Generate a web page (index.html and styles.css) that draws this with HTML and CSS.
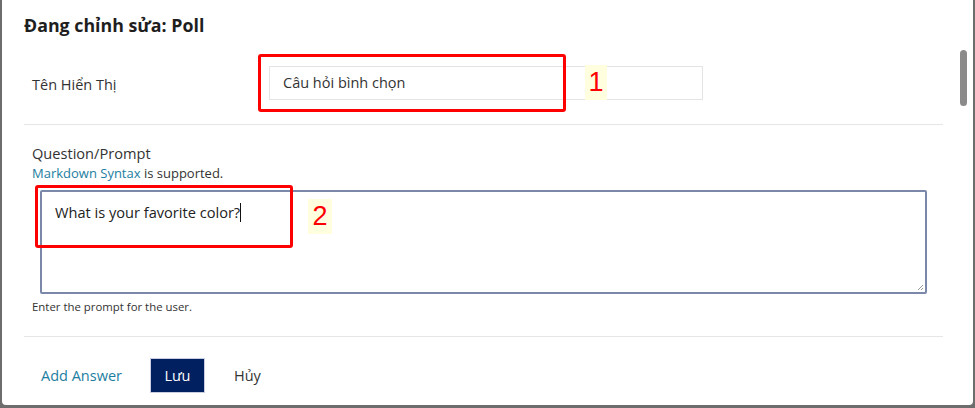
FILE: index.html
```html
<!DOCTYPE html>
<html lang="vi">
<head>
<meta charset="utf-8">
<title>Đang chỉnh sửa: Poll</title>
<link rel="stylesheet" href="styles.css">
</head>
<body>
<div class="modal">
  <h1 class="title">Đang chỉnh sửa: Poll</h1>
  <div class="content">
    <div class="field-row">
      <label class="field-label">Tên Hiển Thị</label>
      <div class="input-wrap">
        <div class="text-input">Câu hỏi bình chọn</div>
        <div class="mark mark-box mark-box-1"></div>
        <div class="mark mark-num mark-num-1">1</div>
      </div>
    </div>
    <div class="field-block">
      <div class="block-label">Question/Prompt</div>
      <div class="hint"><a class="link">Markdown Syntax</a> is supported.</div>
      <div class="textarea-wrap">
        <div class="textarea"><span class="ta-text">What is your favorite color?</span><span class="caret"></span>
          <svg class="resize" width="8" height="8" viewBox="0 0 8 8"><path d="M7 2 L2 7 M7 5 L5 7" stroke="#9a9a9a" stroke-width="1"/></svg>
        </div>
        <div class="mark mark-box mark-box-2"></div>
        <div class="mark mark-num mark-num-2">2</div>
      </div>
      <div class="help">Enter the prompt for the user.</div>
    </div>
    <div class="actions">
      <a class="link add-answer">Add Answer</a>
      <button class="btn-save">Lưu</button>
      <a class="cancel">Hủy</a>
    </div>
  </div>
  <div class="scrollbar"></div>
</div>
</body>
</html>
```
FILE: styles.css
```css
html, body {
  margin: 0;
  padding: 0;
  height: 100%;
}
body {
  background: #6d6d6d;
  font-family: "Open Sans", "Noto Sans", sans-serif;
  color: #333;
  overflow: hidden;
}
.modal {
  position: relative;
  margin: 0 2px 0 2px;
  height: 405px;
  background: #fff;
  border-radius: 0 0 4px 4px;
  box-sizing: border-box;
  padding: 13px 30px 0 22px;
}
.title {
  margin: 0;
  font-size: 17.8px;
  font-weight: 700;
  color: #1e1e1e;
  line-height: 24px;
}
.content {
  margin-top: 17px;
}
.field-row {
  display: flex;
  align-items: center;
  padding: 12px 0 24px 8px;
  border-bottom: 1px solid #e6e6e6;
}
.field-label {
  width: 237px;
  font-size: 14.5px;
  padding-top: 3px;
}
.input-wrap {
  position: relative;
}
.text-input {
  width: 434px;
  height: 34px;
  box-sizing: border-box;
  border: 1px solid #e4e4e4;
  padding: 0 13px;
  font-size: 14.5px;
  line-height: 32px;
  color: #333;
}
.mark-box {
  position: absolute;
  border: 3px solid #f00;
  border-radius: 3px;
  box-sizing: border-box;
}
.mark-box-1 {
  left: -11px;
  top: -12px;
  width: 308px;
  height: 58px;
}
.mark-num {
  position: absolute;
  background: #ffffe0;
  color: #f00;
  font-family: "Liberation Sans", Arial, sans-serif;
  font-size: 27px;
  line-height: 35px;
  text-align: center;
}
.mark-num-1 {
  left: 316px;
  top: -1px;
  width: 22px;
}
.field-block {
  padding: 18px 0 21px 8px;
  border-bottom: 1px solid #e6e6e6;
}
.block-label {
  font-size: 14.6px;
  line-height: 20px;
}
.hint {
  font-size: 13px;
  line-height: 21px;
}
.link {
  color: #1c7ea0;
  text-decoration: none;
}
.textarea-wrap {
  position: relative;
  margin: 6px 0 0 8px;
}
.textarea {
  position: relative;
  width: 887px;
  height: 104px;
  box-sizing: border-box;
  border: 2px solid #7b88aa;
  border-radius: 2px;
  padding: 9px 13px 10px;
  font-size: 14.6px;
  line-height: 22px;
  color: #222;
}
.caret {
  display: inline-block;
  width: 1px;
  height: 19px;
  background: #111;
  vertical-align: -4px;
}
.resize {
  position: absolute;
  right: 1px;
  bottom: 1px;
}
.mark-box-2 {
  left: -5px;
  top: -5px;
  width: 258px;
  height: 63px;
}
.mark-num-2 {
  left: 268px;
  top: 9px;
  width: 24px;
}
.help {
  font-size: 11.4px;
  line-height: 16px;
  margin-top: 5px;
}
.actions {
  display: flex;
  align-items: center;
  padding: 21px 0 0 17px;
  font-size: 14.5px;
}
.add-answer {
  margin-right: 28px;
}
.btn-save {
  background: #002060;
  color: #fff;
  border: 1px solid #c8cde0;
  font-family: inherit;
  font-size: 14.5px;
  width: 55px;
  height: 35px;
  padding: 0;
  margin-right: 29px;
}
.cancel {
  color: #333;
}
.scrollbar {
  position: absolute;
  right: 6px;
  top: 50px;
  width: 7px;
  height: 56px;
  background: #8a8a8a;
  border-radius: 4px;
}
```
